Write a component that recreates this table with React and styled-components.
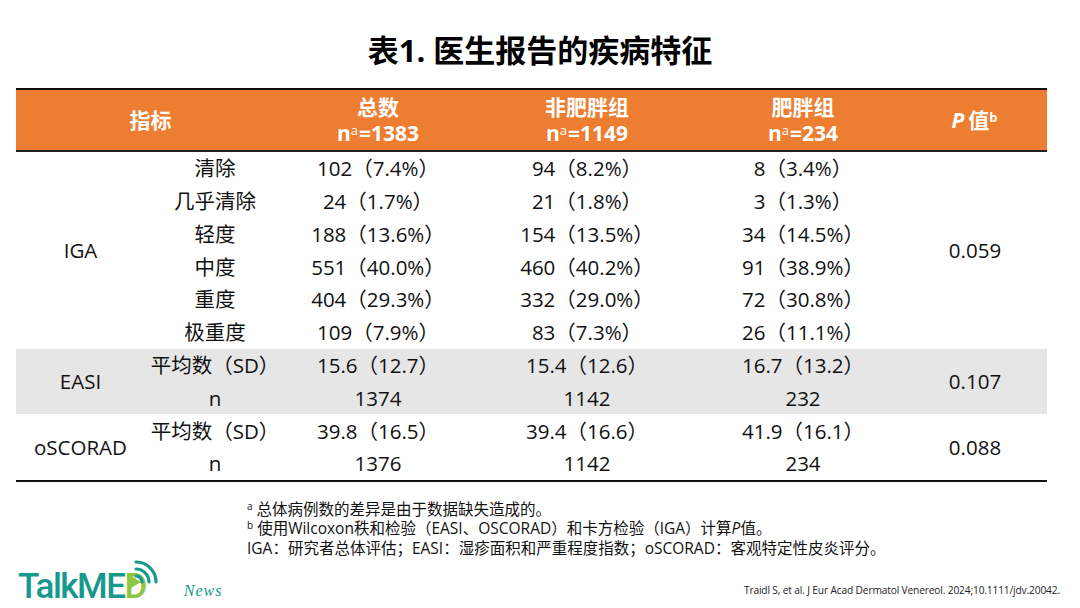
import React from "react";
import styled, { createGlobalStyle } from "styled-components";

const GlobalStyle = createGlobalStyle`
    html, body {
        margin: 0;
        padding: 0;
        background: #fff;
    }
    body {
        font-family: "Open Sans", "Noto Sans CJK SC", sans-serif;
        color: #111;
    }
`;

const Page = styled.div`
    width: 1080px;
    height: 608px;
    display: flex;
    flex-direction: column;
    overflow: hidden;
`;

const Title = styled.h1`
    margin: 0 0 16px;
    padding-top: 28px;
    font-size: 31px;
    line-height: 44px;
    font-weight: 700;
    text-align: center;
    color: #000;
`;

const TableWrap = styled.div`
    padding: 0 33px 0 16px;
`;

const Table = styled.table`
    width: 1031px;
    border-collapse: collapse;
    table-layout: fixed;
    border-bottom: 2px solid #111;
`;

const HeadRow = styled.tr`
    background: #ed7d31;
    border-top: 2px solid #111;
    border-bottom: 2px solid #222;
`;

const Th = styled.th`
    height: 60px;
    padding: 0;
    color: #fff;
    font-size: 21px;
    font-weight: 700;
    line-height: 26px;
    text-align: center;
    vertical-align: middle;
`;

const Sup = styled.span`
    position: relative;
    top: -0.45em;
    font-size: 0.62em;
    line-height: 0;
    margin-right: 1px;
    font-weight: ${({ $bold }) => ($bold ? 700 : 400)};
`;

const Italic = styled.i`
    font-style: italic;
    font-weight: inherit;
    margin-right: ${({ $gap }) => $gap || "0"};
`;

const Row = styled.tr`
    background: ${({ $shade }) => ($shade ? "#e7e6e6" : "transparent")};
`;

const Td = styled.td`
    height: 32.8px;
    padding: 0;
    font-size: 20.5px;
    line-height: 1;
    text-align: center;
    vertical-align: middle;
    white-space: nowrap;
`;

const Notes = styled.div`
    margin-top: 18px;
    padding-left: 247px;
    font-size: 15.5px;
    line-height: 20px;
    color: #111;
`;

const NoteLine = styled.div`
    height: 19.5px;
    line-height: 19.5px;
`;

const NoteSup = styled.span`
    position: relative;
    top: -5px;
    font-size: 10px;
    line-height: 0;
    margin-right: 4px;
`;

const Bottom = styled.div`
    flex: 1;
    display: flex;
    align-items: flex-end;
    justify-content: space-between;
    padding: 0 20px 6px 18px;
`;

const Brand = styled.div`
    display: flex;
    align-items: flex-end;
    gap: 26px;
`;

const Logo = styled.div`
    position: relative;
    font-family: Roboto, "Noto Sans", sans-serif;
    font-size: 35px;
    font-weight: 500;
    line-height: 30px;
    letter-spacing: -1.5px;
    color: #16998b;
    padding-right: 12px;
`;

const LogoD = styled.span`
    position: relative;
    color: #8dc63f;
    &::after {
        content: "";
        position: absolute;
        left: 7px;
        top: 10px;
        border-left: 10px solid #8dc63f;
        border-top: 6px solid transparent;
        border-bottom: 6px solid transparent;
    }
`;

const Waves = styled.svg`
    position: absolute;
    right: -2px;
    top: -12px;
`;

const News = styled.span`
    font-family: "Liberation Serif", serif;
    font-style: italic;
    font-size: 16px;
    color: #16998b;
    letter-spacing: 1px;
    margin-bottom: 2px;
`;

const Cite = styled.div`
    font-size: 10.2px;
    letter-spacing: -0.15px;
    color: #222;
    margin-bottom: 5px;
`;

const iga = [
    ["清除", "102（7.4%）", "94（8.2%）", "8（3.4%）"],
    ["几乎清除", "24（1.7%）", "21（1.8%）", "3（1.3%）"],
    ["轻度", "188（13.6%）", "154（13.5%）", "34（14.5%）"],
    ["中度", "551（40.0%）", "460（40.2%）", "91（38.9%）"],
    ["重度", "404（29.3%）", "332（29.0%）", "72（30.8%）"],
    ["极重度", "109（7.9%）", "83（7.3%）", "26（11.1%）"],
];

const scores = [
    {
        name: "EASI",
        p: "0.107",
        shade: true,
        rows: [
            ["平均数（SD）", "15.6（12.7）", "15.4（12.6）", "16.7（13.2）"],
            ["n", "1374", "1142", "232"],
        ],
    },
    {
        name: "oSCORAD",
        p: "0.088",
        shade: false,
        rows: [
            ["平均数（SD）", "39.8（16.5）", "39.4（16.6）", "41.9（16.1）"],
            ["n", "1376", "1142", "234"],
        ],
    },
];

function App() {
    return (
        <Page>
            <GlobalStyle />
            <Title>表1. 医生报告的疾病特征</Title>
            <TableWrap>
                <Table>
                    <colgroup>
                        <col style={{ width: 129 }} />
                        <col style={{ width: 140 }} />
                        <col style={{ width: 186 }} />
                        <col style={{ width: 232 }} />
                        <col style={{ width: 200 }} />
                        <col style={{ width: 144 }} />
                    </colgroup>
                    <thead>
                        <HeadRow>
                            <Th colSpan={2}>指标</Th>
                            <Th>总数<br />n<Sup>a</Sup>=1383</Th>
                            <Th>非肥胖组<br />n<Sup>a</Sup>=1149</Th>
                            <Th>肥胖组<br />n<Sup>a</Sup>=234</Th>
                            <Th><Italic $gap="4px">P</Italic>值<Sup $bold>b</Sup></Th>
                        </HeadRow>
                    </thead>
                    <tbody>
                        {iga.map((r, i) => (
                            <Row key={r[0]}>
                                {i === 0 && <Td rowSpan={iga.length}>IGA</Td>}
                                {r.map((c, j) => <Td key={j}>{c}</Td>)}
                                {i === 0 && <Td rowSpan={iga.length}>0.059</Td>}
                            </Row>
                        ))}
                        {scores.map((s) =>
                            s.rows.map((r, i) => (
                                <Row key={s.name + i} $shade={s.shade}>
                                    {i === 0 && <Td rowSpan={2}>{s.name}</Td>}
                                    {r.map((c, j) => <Td key={j}>{c}</Td>)}
                                    {i === 0 && <Td rowSpan={2}>{s.p}</Td>}
                                </Row>
                            ))
                        )}
                    </tbody>
                </Table>
            </TableWrap>
            <Notes>
                <NoteLine><NoteSup>a</NoteSup>总体病例数的差异是由于数据缺失造成的。</NoteLine>
                <NoteLine><NoteSup>b</NoteSup>使用Wilcoxon秩和检验（EASI、OSCORAD）和卡方检验（IGA）计算<Italic>P</Italic>值。</NoteLine>
                <NoteLine>IGA：研究者总体评估；EASI：湿疹面积和严重程度指数；oSCORAD：客观特定性皮炎评分。</NoteLine>
            </Notes>
            <Bottom>
                <Brand>
                    <Logo>
                        TalkME<LogoD>D</LogoD>
                        <Waves width="30" height="28" viewBox="0 0 30 28">
                            <g fill="none" stroke="#16998b" strokeWidth="3.2" strokeLinecap="round">
                                <path d="M6 16 A6 6 0 0 1 12 22" />
                                <path d="M6 9 A13 13 0 0 1 19 22" />
                                <path d="M6 2 A20 20 0 0 1 26 22" />
                            </g>
                        </Waves>
                    </Logo>
                    <News>News</News>
                </Brand>
                <Cite>Traidl S, et al. J Eur Acad Dermatol Venereol. 2024;10.1111/jdv.20042.</Cite>
            </Bottom>
        </Page>
    );
}

export default App;
